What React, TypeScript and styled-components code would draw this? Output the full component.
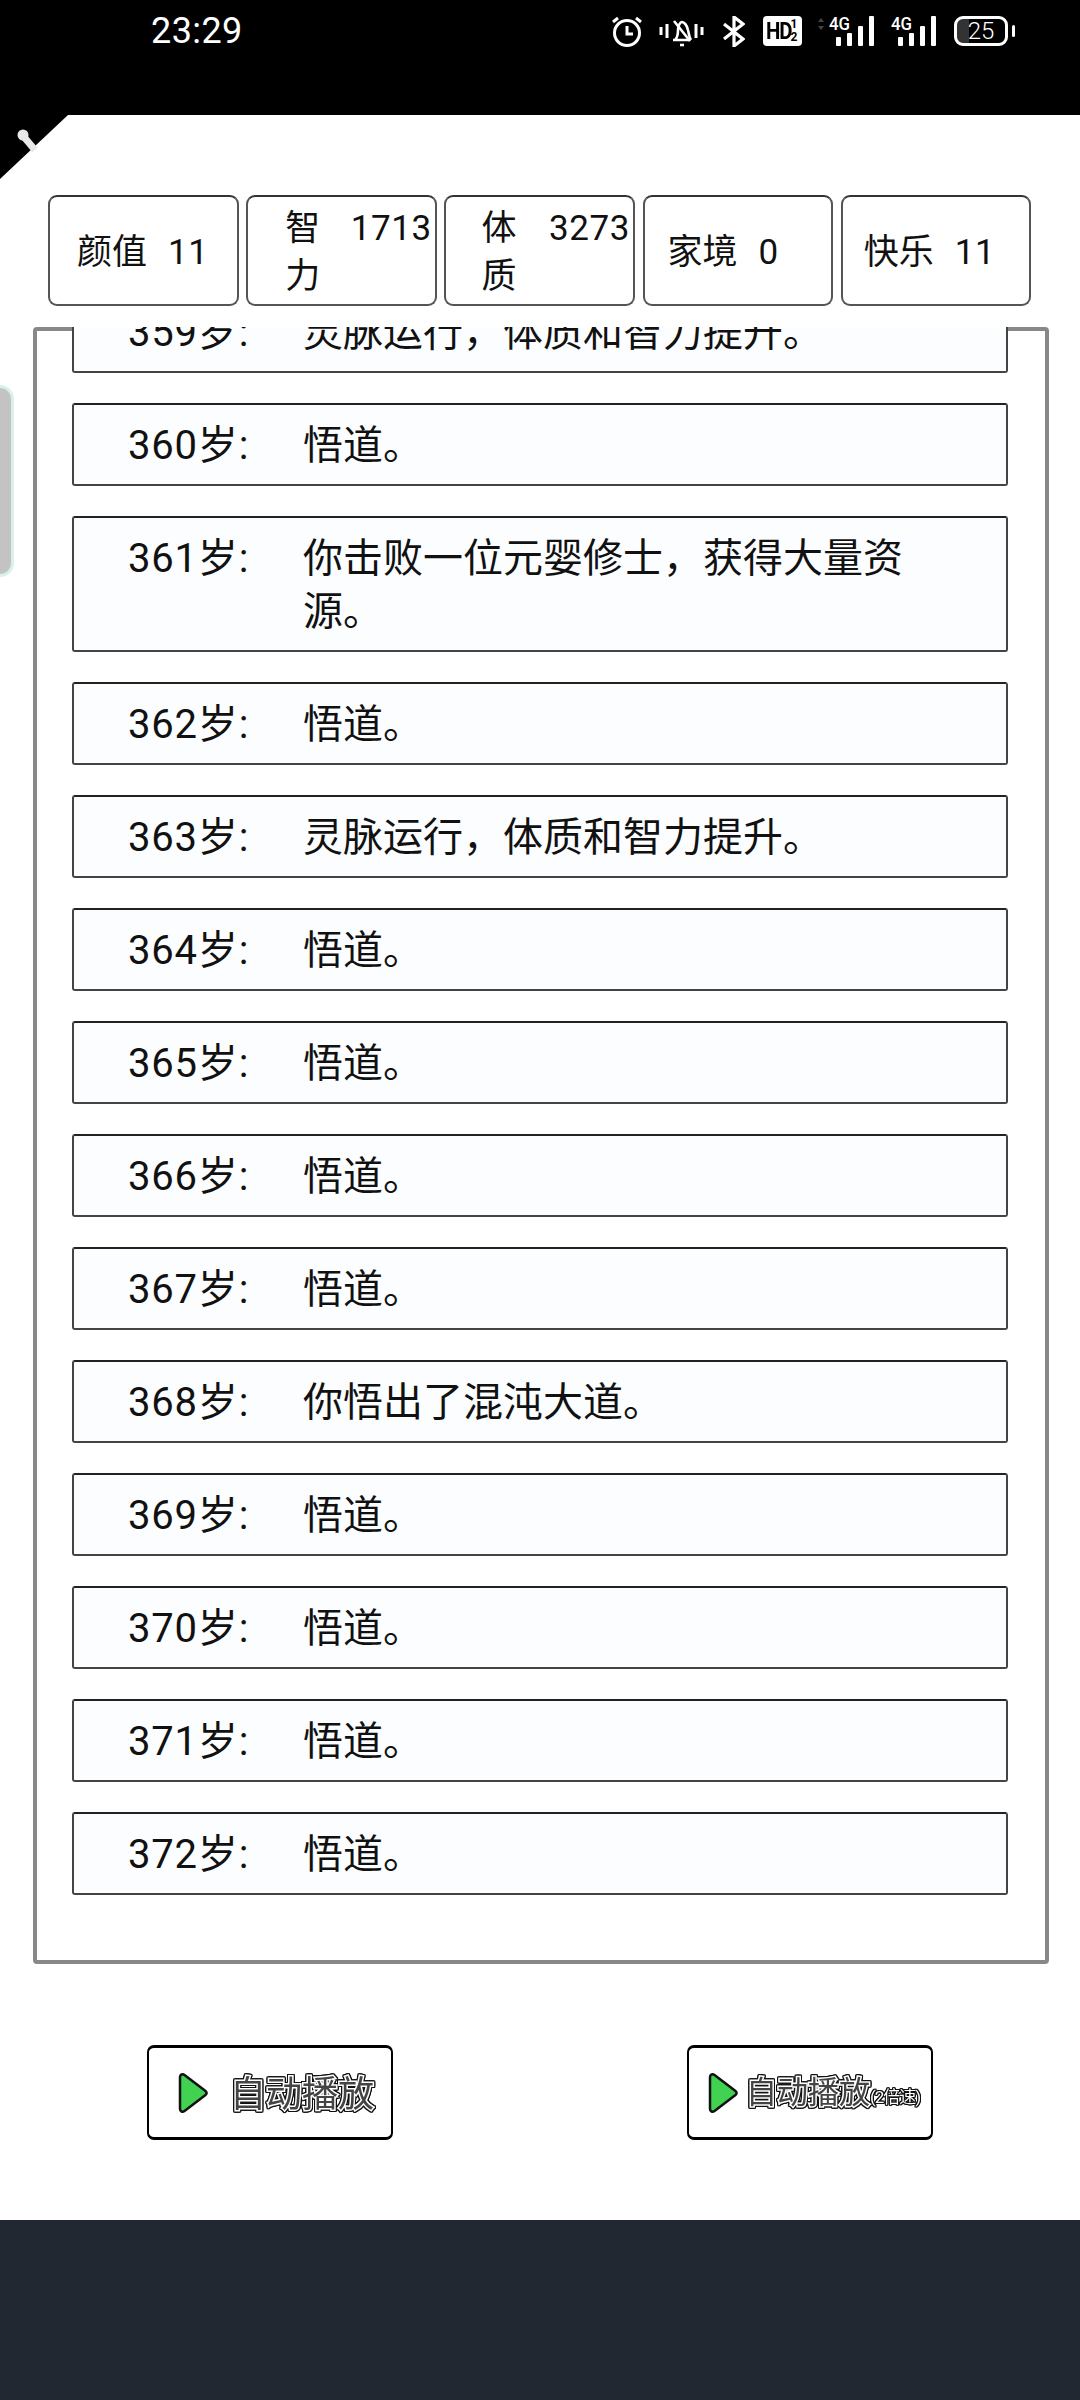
import styled, {createGlobalStyle} from 'styled-components';

const GlobalStyle = createGlobalStyle`
  html, body {
    margin: 0;
    padding: 0;
    background: #fff;
  }
  * {
    box-sizing: border-box;
  }
`;

const Page = styled.div`
  position: relative;
  display: flex;
  flex-direction: column;
  width: 1080px;
  height: 2400px;
  overflow: hidden;
  background: #fff;
  color: #111;
  font-family: Roboto, 'Noto Sans CJK SC', sans-serif;
`;

const StatusBar = styled.div`
  display: flex;
  align-items: flex-start;
  height: 115px;
  padding: 16px 72px 0 151px;
  background: #000;
  color: #fff;
`;

const Clock = styled.span`
  font-size: 36px;
  line-height: 30px;
  letter-spacing: 0.4px;
`;

const StatusIcons = styled.div`
  display: flex;
  align-items: flex-start;
  margin-left: auto;
`;

const StatusIcon = styled.svg<{$gap?: number}>`
  display: block;
  margin-left: ${(props) => props.$gap ?? 0}px;
`;

const HdBadge = styled.div`
  display: flex;
  align-items: center;
  justify-content: center;
  width: 39px;
  height: 30px;
  margin-left: 18px;
  border-radius: 4px;
  background: #fff;
  color: #000;
`;

const HdLabel = styled.span`
  font-size: 24px;
  font-weight: 700;
  letter-spacing: -1.5px;
  line-height: 30px;
  transform: scaleX(0.85);
  transform-origin: left center;
  width: 23px;
`;

const HdFraction = styled.span`
  display: flex;
  flex-direction: column;
  width: 10px;
  font-size: 12px;
  font-weight: 700;
  line-height: 13px;
  text-align: center;
`;

const Battery = styled.div`
  position: relative;
  display: flex;
  align-items: center;
  justify-content: center;
  width: 54px;
  height: 30px;
  margin-left: 18px;
  border: 3px solid #fff;
  border-radius: 9px;
  font-size: 24px;
  font-weight: 300;
  background: linear-gradient(90deg, #333 0 24%, #000 24%);
  &::after {
    content: '';
    position: absolute;
    right: -10px;
    top: 6px;
    width: 3px;
    height: 12px;
    border-radius: 2px;
    background: #fff;
  }
`;

const CornerBadge = styled.svg`
  position: absolute;
  left: 0;
  top: 115px;
`;

const SideHandle = styled.div`
  position: absolute;
  left: -4px;
  top: 385px;
  width: 18px;
  height: 192px;
  border: 3px solid #d8f1ea;
  border-radius: 0 14px 14px 0;
  background: #c3c3c3;
`;

const StatBar = styled.div`
  display: flex;
  gap: 7.5px;
  height: 111px;
  margin: 80px 0 0 48px;
`;

const StatChip = styled.div<{$inset: number; $wrapped?: boolean}>`
  display: flex;
  align-items: flex-start;
  justify-content: ${(props) => (props.$wrapped ? 'space-between' : 'flex-start')};
  gap: 21px;
  width: 190.7px;
  padding: ${(props) => (props.$wrapped ? '8px' : '32px')} 3px 0 ${(props) => props.$inset}px;
  border: 2px solid #555;
  border-top-color: #333;
  border-bottom-color: #555;
  border-radius: 9px;
  font-size: 35px;
  line-height: 48px;
`;

const StatLabel = styled.span<{$wrapped?: boolean}>`
  flex-shrink: 0;
  max-width: ${(props) => (props.$wrapped ? '36px' : 'none')};
`;

const StatValue = styled.span`
  flex-shrink: 0;
  white-space: nowrap;
  letter-spacing: 0.6px;
`;

const LogPanel = styled.div`
  display: flex;
  flex-direction: column;
  width: 1016px;
  height: 1637px;
  margin: 21px 0 0 33px;
  border: 4px solid #888;
  border-radius: 4px;
`;

// the viewport rides over the panel's top border, the list inside is scrolled
const LogViewport = styled.div`
  height: 1600px;
  margin-top: -4px;
  padding: 0 37px 0 35px;
  overflow: hidden;
`;

const LogList = styled.div`
  display: flex;
  flex-direction: column;
  gap: 30px;
  margin-top: -37px;
`;

const LogRow = styled.div`
  display: flex;
  padding: 13.5px 70px 12.5px 54px;
  border: 2px solid #444;
  border-top-color: #222;
  border-radius: 3px;
  background: #fcfdff;
  font-size: 40px;
  line-height: 53px;
`;

const LogAge = styled.span`
  flex: 0 0 175px;
  letter-spacing: 0.8px;
`;

const LogText = styled.span`
  flex: 1;
`;

const ControlRow = styled.div`
  display: grid;
  grid-template-columns: 1fr 1fr;
  justify-items: center;
  margin-top: 81px;
`;

const PlayButton = styled.div<{$compact?: boolean}>`
  display: flex;
  align-items: center;
  gap: ${(props) => (props.$compact ? '7px' : '21px')};
  width: 246px;
  height: 95px;
  padding-left: ${(props) => (props.$compact ? '18px' : '28px')};
  border: 2px solid #000;
  border-top-width: 3px;
  border-bottom-width: 3px;
  border-radius: 7px;
  background: #fff;
`;

// white halo around the glyphs, dark contour around the halo
const PlayLabel = styled.span<{$compact?: boolean}>`
  padding-top: 5px;
  color: #444;
  font-size: ${(props) => (props.$compact ? '31px' : '36px')};
  line-height: 44px;
  white-space: nowrap;
  -webkit-text-stroke: 3px #fff;
  paint-order: stroke fill;
  filter: drop-shadow(1px 0 0 #111) drop-shadow(-1px 0 0 #111) drop-shadow(0 1px 0 #111)
    drop-shadow(0 -1px 0 #111);
`;

const SpeedNote = styled.span`
  font-size: 17px;
  letter-spacing: -1px;
  color: #fff;
  -webkit-text-stroke: 0;
`;

const Footer = styled.div`
  flex: 1;
  margin-top: 80px;
  background: #212832;
`;

const stats = [
  {label: '颜值', value: 11, inset: 27},
  {label: '智力', value: 1713, inset: 37, wrapped: true},
  {label: '体质', value: 3273, inset: 35, wrapped: true},
  {label: '家境', value: 0, inset: 23},
  {label: '快乐', value: 11, inset: 21},
];

const logs = [
  {age: 359, text: '灵脉运行，体质和智力提升。'},
  {age: 360, text: '悟道。'},
  {age: 361, text: '你击败一位元婴修士，获得大量资源。'},
  {age: 362, text: '悟道。'},
  {age: 363, text: '灵脉运行，体质和智力提升。'},
  {age: 364, text: '悟道。'},
  {age: 365, text: '悟道。'},
  {age: 366, text: '悟道。'},
  {age: 367, text: '悟道。'},
  {age: 368, text: '你悟出了混沌大道。'},
  {age: 369, text: '悟道。'},
  {age: 370, text: '悟道。'},
  {age: 371, text: '悟道。'},
  {age: 372, text: '悟道。'},
];

const AlarmIcon = () => (
  <StatusIcon width="30" height="31" viewBox="0 0 30 31" fill="none" stroke="#fff">
    <circle cx="15" cy="17" r="12.5" strokeWidth="3" />
    <path d="M15 10v8h6" strokeWidth="3" />
    <path d="M1 6l5-4M29 6l-5-4" strokeWidth="3" />
  </StatusIcon>
);

const MutedBellIcon = () => (
  <StatusIcon $gap={17} width="45" height="31" viewBox="0 0 45 31" fill="none" stroke="#fff">
    <path d="M2 11v8M8 8v14M37 8v14M43 11v8" strokeWidth="3" />
    <path d="M14 24h17M16 24c3-3 3-7 3-10 0-4 2-8 4-8s5 3 6 8c1 4 1 7 3 10" strokeWidth="2.6" />
    <path d="M15 5l16 20" strokeWidth="2.6" />
    <path d="M21 29h4" strokeWidth="2.6" />
  </StatusIcon>
);

const BluetoothIcon = () => (
  <StatusIcon $gap={18} width="23" height="31" viewBox="0 0 23 31" fill="none" stroke="#fff">
    <path d="M2 8l19 15-9 7V1l9 7L2 23" strokeWidth="3.2" />
  </StatusIcon>
);

const SignalIcon = ({updown, gap}: {updown?: boolean; gap: number}) => (
  <StatusIcon $gap={gap} width={updown ? 57 : 45} height="31" viewBox={`${updown ? -12 : 0} 0 ${updown ? 57 : 45} 31`}>
    {updown ? <path d="M-8 2l-3 4h6zM-8 14l-3-4h6z" fill="#444" /> : null}
    <text x="0" y="14" fill="#fff" fontSize="18" fontWeight="500" fontFamily="Roboto, sans-serif" textLength="21" lengthAdjust="spacingAndGlyphs">
      4G
    </text>
    <rect x="7" y="21" width="5" height="9" rx="1" fill="#fff" />
    <rect x="18" y="17" width="5" height="13" rx="1" fill="#fff" />
    <rect x="29" y="10" width="5" height="20" rx="1" fill="#fff" />
    <rect x="40" y="0" width="5" height="30" rx="1" fill="#fff" />
  </StatusIcon>
);

const PlayIcon = () => (
  <svg width="32" height="42" viewBox="0 0 32 42">
    <path
      d="M3 5c0-2.500 2.500-3.500 4.500-2l21 16c1.500 1.200 1.500 2.800 0 4l-21 16c-2 1.500-4.500.5-4.500-2z"
      fill="#41d251"
      stroke="#111"
      strokeWidth="2.500"
      strokeLinejoin="round"
    />
  </svg>
);

export default function App() {
  return (
    <Page>
      <GlobalStyle />
      <StatusBar>
        <Clock>23:29</Clock>
        <StatusIcons>
          <AlarmIcon />
          <MutedBellIcon />
          <BluetoothIcon />
          <HdBadge>
            <HdLabel>HD</HdLabel>
            <HdFraction>
              <span>1</span>
              <span>2</span>
            </HdFraction>
          </HdBadge>
          <SignalIcon updown gap={15} />
          <SignalIcon gap={17} />
          <Battery>25</Battery>
        </StatusIcons>
      </StatusBar>

      <CornerBadge width="68" height="64" viewBox="0 0 68 64">
        <path d="M0 0h68L0 64z" fill="#000" />
        <path d="M24 22l11 13" stroke="#e8e8e8" strokeWidth="7" />
        <circle cx="23" cy="20" r="5.500" fill="#e8e8e8" />
      </CornerBadge>
      <SideHandle />

      <StatBar>
        {stats.map((stat) => (
          <StatChip key={stat.label} $inset={stat.inset} $wrapped={stat.wrapped}>
            <StatLabel $wrapped={stat.wrapped}>{stat.label}</StatLabel>
            <StatValue>{stat.value}</StatValue>
          </StatChip>
        ))}
      </StatBar>

      <LogPanel>
        <LogViewport>
          <LogList>
            {logs.map((log) => (
              <LogRow key={log.age}>
                <LogAge>{log.age}岁:</LogAge>
                <LogText>{log.text}</LogText>
              </LogRow>
            ))}
          </LogList>
        </LogViewport>
      </LogPanel>

      <ControlRow>
        <PlayButton>
          <PlayIcon />
          <PlayLabel>自动播放</PlayLabel>
        </PlayButton>
        <PlayButton $compact>
          <PlayIcon />
          <PlayLabel $compact>
            自动播放
            <SpeedNote>(2倍速)</SpeedNote>
          </PlayLabel>
        </PlayButton>
      </ControlRow>

      <Footer />
    </Page>
  );
}
